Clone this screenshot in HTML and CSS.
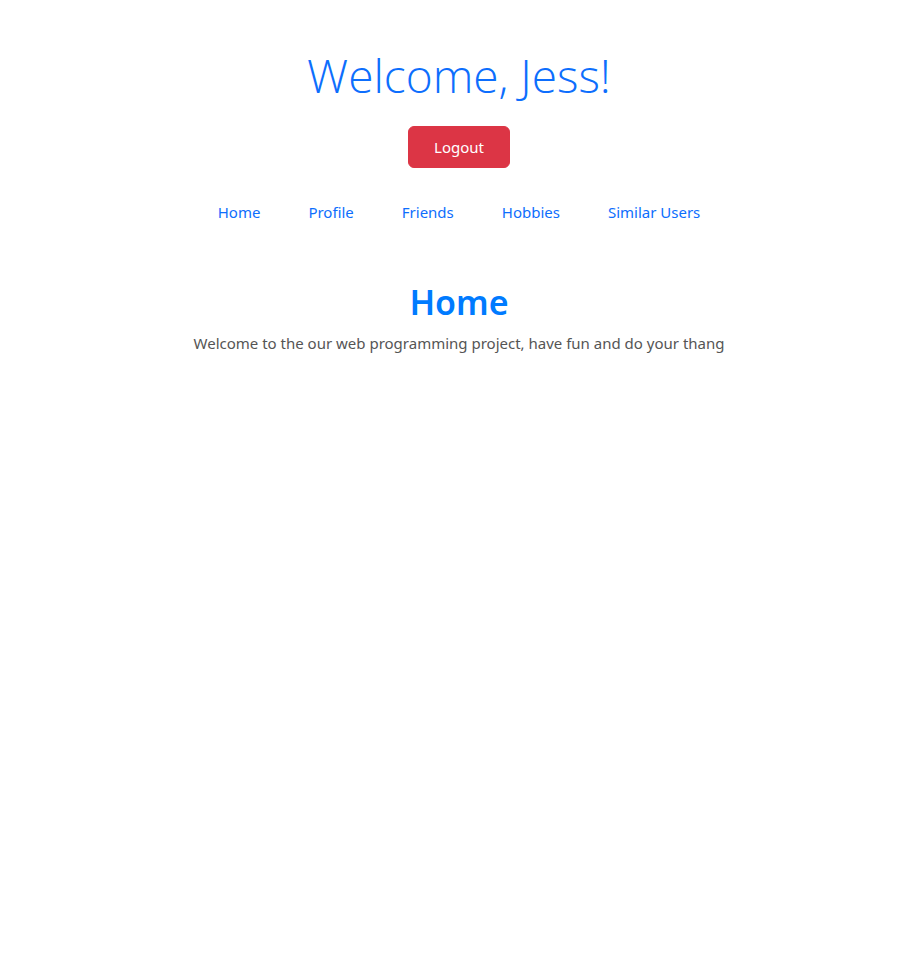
FILE: index.html
```html
<!DOCTYPE html>
<html lang="en">
<head>
<meta charset="utf-8">
<title>Welcome</title>
<link rel="stylesheet" href="styles.css">
</head>
<body>
<header class="top">
  <h1 class="welcome">Welcome, Jess!</h1>
  <button class="logout" type="button">Logout</button>
  <nav class="menu">
    <a class="menu-link" href="#">Home</a>
    <a class="menu-link" href="#">Profile</a>
    <a class="menu-link" href="#">Friends</a>
    <a class="menu-link" href="#">Hobbies</a>
    <a class="menu-link" href="#">Similar Users</a>
  </nav>
</header>
<main class="content">
  <h2 class="section-title">Home</h2>
  <p class="section-text">Welcome to the our web programming project, have fun and do your thang</p>
</main>
</body>
</html>
```
FILE: styles.css
```css
html, body {
  margin: 0;
  padding: 0;
  background: #fff;
}
body {
  font-family: "Noto Sans", "Open Sans", sans-serif;
  font-size: 15px;
  line-height: 1.5;
  color: #212529;
}
.top {
  display: flex;
  flex-direction: column;
  align-items: center;
  padding-top: 48px;
}
.welcome {
  margin: 0;
  font-family: "Open Sans", sans-serif;
  font-weight: 300;
  font-size: 46px;
  line-height: 55px;
  color: #0d6efd;
}
.logout {
  margin-top: 23px;
  font-family: inherit;
  font-size: 15px;
  line-height: 24px;
  padding: 8px 25px;
  border: 1px solid #dc3545;
  border-radius: 6px;
  background: #dc3545;
  color: #fff;
  cursor: pointer;
}
.menu {
  display: flex;
  justify-content: center;
  margin-top: 32px;
}
.menu-link {
  padding: 0 24px;
  line-height: 24px;
  color: #0d6efd;
  text-decoration: none;
}
.content {
  display: flex;
  flex-direction: column;
  align-items: center;
  padding-top: 58px;
}
.section-title {
  margin: 0;
  font-size: 34px;
  font-weight: 600;
  line-height: 1.2;
  color: #007bff;
}
.section-text {
  margin: 9px 0 0;
  color: #555;
}
```
